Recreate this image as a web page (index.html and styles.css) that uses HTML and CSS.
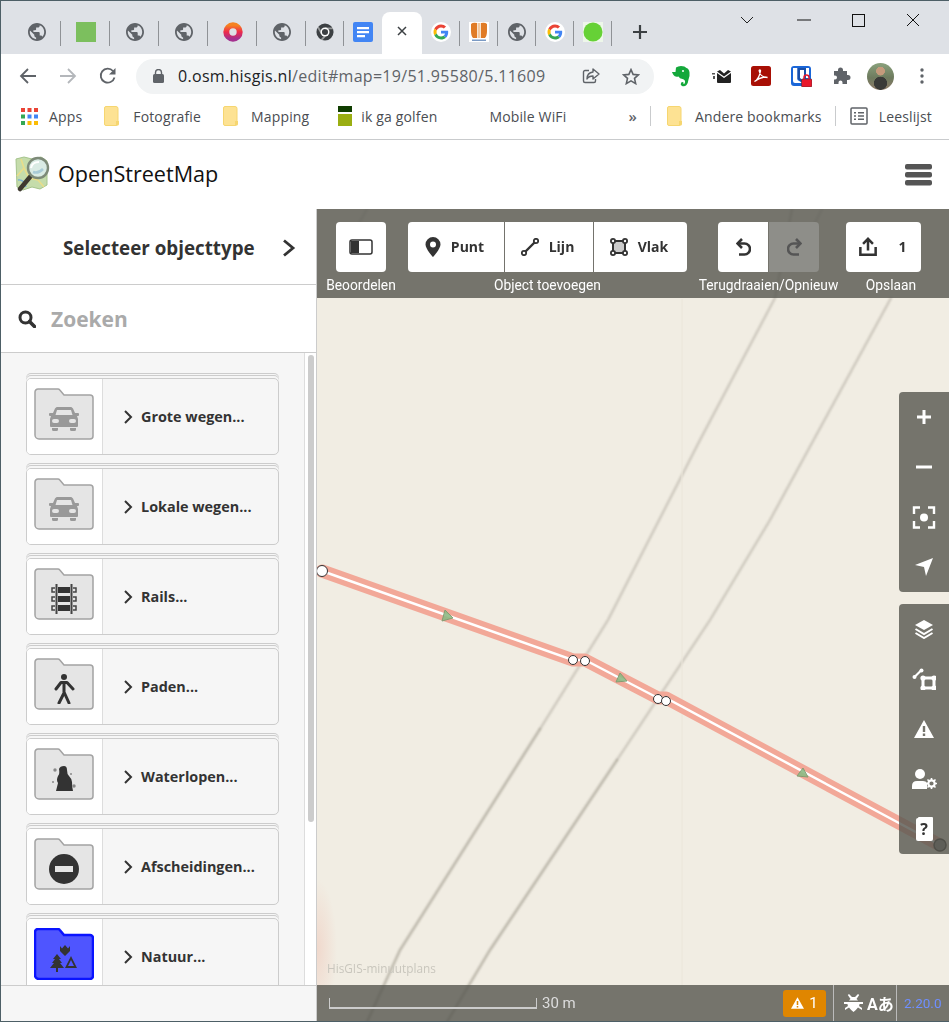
FILE: index.html
```html
<!DOCTYPE html>
<html lang="nl">
<head>
  <meta charset="UTF-8">
  <meta name="viewport" content="width=device-width, initial-scale=1.0">
  <title>OpenStreetMap</title>
  <link rel="stylesheet" href="styles.css">
</head>
<body>
  <svg class="sprite" width="0" height="0">
    <symbol id="globe" viewBox="2 2 20 20"><path fill="#5f6368" d="M12 2C6.48 2 2 6.48 2 12s4.48 10 10 10 10-4.48 10-10S17.52 2 12 2zm-1 17.93c-3.95-.49-7-3.85-7-7.93 0-.62.08-1.21.21-1.79L9 15v1c0 1.1.9 2 2 2v1.93zm6.9-2.54c-.26-.81-1-1.39-1.9-1.39h-1v-3c0-.55-.45-1-1-1H8v-2h2c.55 0 1-.45 1-1V7h2c1.1 0 2-.9 2-2v-.41c2.93 1.19 5 4.06 5 7.41 0 2.08-.8 3.97-2.1 5.39z"/></symbol>
    <symbol id="google" viewBox="-8 -8 64 64">
      <circle cx="24" cy="24" r="32" fill="#fff"/>
      <path fill="#EA4335" d="M24 9.5c3.54 0 6.71 1.22 9.21 3.6l6.85-6.85C35.9 2.38 30.47 0 24 0 14.62 0 6.51 5.38 2.56 13.22l7.98 6.19C12.43 13.72 17.74 9.5 24 9.5z"/>
      <path fill="#4285F4" d="M46.98 24.55c0-1.57-.15-3.09-.38-4.55H24v9.02h12.94c-.58 2.96-2.26 5.48-4.78 7.18l7.73 6c4.51-4.18 7.09-10.36 7.09-17.65z"/>
      <path fill="#FBBC05" d="M10.53 28.59c-.48-1.45-.76-2.99-.76-4.59s.27-3.14.76-4.59l-7.98-6.19C.92 16.46 0 20.12 0 24c0 3.88.92 7.54 2.56 10.78l7.97-6.19z"/>
      <path fill="#34A853" d="M24 48c6.48 0 11.93-2.13 15.89-5.81l-7.73-6c-2.15 1.45-4.92 2.3-8.16 2.3-6.26 0-11.57-4.22-13.47-9.91l-7.98 6.19C6.51 42.62 14.62 48 24 48z"/>
    </symbol>
    <symbol id="bm-folder" viewBox="0 0 16 20"><path fill="#fde293" stroke="#f6d670" d="M2 .5h10a2 2 0 0 1 2 2v15a2 2 0 0 1-2 2H2a1.500 1.500 0 0 1-1.500-1.500V2A1.500 1.500 0 0 1 2 .5z"/><path fill="#f6d670" d="M12 15h3v3a1.500 1.500 0 0 1-1.500 1.500H12z"/></symbol>
    <symbol id="folder" viewBox="0 0 60 52"><path d="M4 1h20a2 2 0 0 1 1.600.8L30 7h26a3 3 0 0 1 3 3v38a3 3 0 0 1-3 3H5a4 4 0 0 1-4-4V4a3 3 0 0 1 3-3z"/></symbol>
    <symbol id="car" viewBox="0 0 30 24"><path d="M6 1.500C6.500.600 7.500 0 8.500 0h13c1 0 2 .6 2.500 1.500L26 6h3a1 1 0 0 1 1 1v1a1 1 0 0 1-1 1h-1l1 3v7a1 1 0 0 1-1 1H2a1 1 0 0 1-1-1v-7l1-3H1a1 1 0 0 1-1-1V7a1 1 0 0 1 1-1h3zM8 3 6.500 8h17L22 3zM5 12a2 2 0 0 0 0 4h3a2 2 0 0 0 0-4zm17 0a2 2 0 0 0 0 4h3a2 2 0 0 0 0-4zM3 21h6v1.500A1.500 1.500 0 0 1 7.500 24h-3A1.500 1.500 0 0 1 3 22.500zm18 0h6v1.500a1.500 1.500 0 0 1-1.500 1.500h-3a1.500 1.500 0 0 1-1.500-1.500z"/></symbol>
  </svg>

  <div class="window">
    <div class="tabstrip">
      <div class="tab"><svg class="fav"><use href="#globe"/></svg></div>
      <div class="tab"><span class="fav-square"></span></div>
      <div class="tab"><svg class="fav"><use href="#globe"/></svg></div>
      <div class="tab"><svg class="fav"><use href="#globe"/></svg></div>
      <div class="tab">
        <svg class="fav fav-lg" viewBox="0 0 20 20"><defs><linearGradient id="poppy" x1="0" y1="0" x2="0" y2="1"><stop offset="0" stop-color="#f58220"/><stop offset=".5" stop-color="#ee2a4b"/><stop offset="1" stop-color="#a4308f"/></linearGradient></defs><circle cx="10" cy="10" r="6.700" fill="none" stroke="url(#poppy)" stroke-width="6"/></svg>
      </div>
      <div class="tab"><svg class="fav"><use href="#globe"/></svg></div>
      <div class="tab tab-narrow">
        <svg class="fav" viewBox="0 0 20 20"><circle cx="10" cy="10" r="9.500" fill="#3c4043"/><circle cx="10" cy="10" r="5" fill="#fff"/><circle cx="10" cy="10" r="3.400" fill="#3c4043"/><path d="M10 5h8.500l.5 2h-9zM5.600 12.500 1.500 5.500 3 4l4 7zM11 15l-4 4.500-2-1 4-4.500z" fill="#fff" opacity=".45"/></svg>
      </div>
      <div class="tab tab-narrow tab-plain">
        <svg class="fav fav-lg" viewBox="0 0 20 20"><rect width="20" height="20" rx="2" fill="#4285f4"/><path d="M4 5h12v2.200H4zM4 9h12v2.200H4zM4 13h8v2.200H4z" fill="#fff"/></svg>
      </div>
      <div class="tab-active">
        <svg width="10" height="10" viewBox="0 0 10 10"><path d="M1 1l8 8M9 1l-8 8" stroke="#3c4043" stroke-width="1.500"/></svg>
      </div>
      <div class="tab tab-narrow"><svg class="fav fav-g"><use href="#google"/></svg></div>
      <div class="tab tab-narrow">
        <svg class="fav fav-lg" viewBox="0 0 20 20"><rect width="20" height="20" fill="#fff"/><path d="M2 2q2-2 6-1v15H4q-2-2-2-7zM18 2q-2-2-6-1v15h4q2-2 2-7z" fill="#e07b26"/><path d="M8.500 1h3v15h-3z" fill="#f3c9a0"/><path d="M3 17.500h14v1.500H3z" fill="#7b9ac4"/></svg>
      </div>
      <div class="tab tab-narrow"><svg class="fav"><use href="#globe"/></svg></div>
      <div class="tab tab-narrow"><svg class="fav fav-g"><use href="#google"/></svg></div>
      <div class="tab tab-narrow">
        <svg class="fav fav-lg" viewBox="0 0 20 20"><rect width="20" height="20" fill="#eef7ea"/><circle cx="10" cy="10" r="9.500" fill="#66d136"/></svg>
      </div>
      <svg class="new-tab" width="16" height="16" viewBox="0 0 16 16"><path d="M8 1v14M1 8h14" stroke="#3c4043" stroke-width="2.200"/></svg>
      <div class="window-controls">
        <svg width="14" height="8" viewBox="0 0 14 8"><path d="M1 1l6 6 6-6" fill="none" stroke="#222"/></svg>
        <svg width="14" height="2" viewBox="0 0 14 2"><path d="M0 1h14" stroke="#111"/></svg>
        <svg width="13" height="13" viewBox="0 0 13 13"><rect x=".5" y=".5" width="12" height="12" fill="none" stroke="#111"/></svg>
        <svg width="14" height="14" viewBox="0 0 14 14"><path d="M1 1l12 12M13 1 1 13" stroke="#111"/></svg>
      </div>
    </div>

    <div class="toolbar">
      <svg class="nav-icon" viewBox="0 0 18 18"><path d="M17 9H2M9 2 2 9l7 7" fill="none" stroke="#5f6368" stroke-width="1.800"/></svg>
      <svg class="nav-icon" viewBox="0 0 18 18"><path d="M1 9h15M9 2l7 7-7 7" fill="none" stroke="#b4b7bb" stroke-width="1.800"/></svg>
      <svg class="nav-icon" viewBox="0 0 18 18"><path d="M15.500 10.500A7 7 0 1 1 14 4" fill="none" stroke="#5f6368" stroke-width="1.800"/><path d="M16.500 1v6.500H10z" fill="#5f6368"/></svg>
      <div class="omnibox">
        <svg class="lock" width="11" height="14" viewBox="0 0 11 14"><path d="M2.500 5V3.500a3 3 0 0 1 6 0V5" fill="none" stroke="#5f6368" stroke-width="1.400"/><rect y="5" width="11" height="9" rx="1.500" fill="#5f6368"/></svg>
        <span class="url"><span class="url-host">0.osm.hisgis.nl</span>/edit#map=19/51.95580/5.11609</span>
        <svg class="omni-icon omni-share" width="18" height="16" viewBox="0 0 18 16"><path d="M7 2.500H3A1.500 1.500 0 0 0 1.500 4v9A1.500 1.500 0 0 0 3 14.500h9a1.500 1.500 0 0 0 1.500-1.500v-2" fill="none" stroke="#5f6368" stroke-width="1.400"/><path d="M11 1l6 5-6 5V8C8 8 6 9 5 11c0-4 2-6.500 6-7z" fill="none" stroke="#5f6368" stroke-width="1.400" stroke-linejoin="round"/></svg>
        <svg class="omni-icon omni-star" width="18" height="17" viewBox="0 0 17 16"><path d="M8.500 1.500 10.500 6l5 .5-3.700 3.300 1.100 4.900-4.400-2.600-4.400 2.600 1.100-4.900L1.500 6.500l5-.5z" fill="none" stroke="#5f6368" stroke-width="1.500"/></svg>
      </div>
      <div class="extensions">
        <svg width="18" height="21" viewBox="0 0 18 21"><path d="M4 1.500Q6 0 9 0q4 0 5.500 2 2.500.5 3 4.500.5 4-1 7-.5 4-2 5.500-2 2-4.500 1-2-1-1-3 1-1.500 2.500-.5.500 1-.5 1.500 1.500.5 2-1.500.5-3-2.500-3.500-3-.5-4-2.500-3.500 1-5-1.500T0 6h3.500z" fill="#14a83b"/><circle cx="11" cy="5" r="1" fill="#fff"/></svg>
        <svg class="ext-mail" width="20" height="13" viewBox="0 0 20 13"><path d="M5 3 12 8l7-5v9a1 1 0 0 1-1 1H6a1 1 0 0 1-1-1zM5 1.500 8 0l4 3.500L16 0l3 1.500L12 6.500z" fill="#222"/><path d="M0 3h3v1.500H0zM1 6h2v3H1z" fill="#555"/></svg>
        <svg width="20" height="20" viewBox="0 0 20 20"><rect width="20" height="20" rx="2.500" fill="#a80f05"/><path d="M3.500 15.500C6 14.500 8.500 10 9.500 5c.2-1.500-1.500-1.500-1.300 0 .5 3 3 6.500 8.300 6.500-3-.8-7-.5-13 4z" fill="none" stroke="#fff" stroke-width="1.300"/></svg>
        <svg width="21" height="21" viewBox="0 0 21 21"><rect width="20" height="20" rx="3" fill="#1a66d8"/><path d="M2 2h4.500v12l5 3H4a2 2 0 0 1-2-2z" fill="#fff"/><path d="M8 2h10v10h-3V4.500H8z" fill="#fff"/><path d="M6.500 2H15v11l-4.200 3-4.300-3z" fill="#1a4fa8"/><path d="M9 4h4v8l-2 1.500L9 12z" fill="#fff"/><rect x="10.500" y="13" width="10.500" height="8" rx="1" fill="#e8182c" stroke="#333" stroke-width=".5"/><path d="M13 13v-1.500a2.500 2.500 0 0 1 5 0V13" fill="none" stroke="#e8182c" stroke-width="1.500"/></svg>
        <svg class="ext-puzzle" width="18" height="18" viewBox="0 0 18 18"><path d="M1 4h4V3a2.500 2.500 0 0 1 5 0v1h4v4h1a2.500 2.500 0 0 1 0 5h-1v4H9.500v-1.500a2 2 0 0 0-4 0V17H1v-4.500h1a2 2 0 0 0 0-4H1z" fill="#5f6368"/></svg>
        <span class="avatar"></span>
        <svg class="ext-menu" width="4" height="16" viewBox="0 0 4 16"><circle cx="2" cy="2" r="1.700" fill="#5f6368"/><circle cx="2" cy="8" r="1.700" fill="#5f6368"/><circle cx="2" cy="14" r="1.700" fill="#5f6368"/></svg>
      </div>
    </div>

    <div class="bookmarks">
      <span class="bm bm-apps">
        <svg width="17" height="17" viewBox="0 0 17 17"><g fill="#ea4335"><rect width="4" height="4"/><rect x="6.500" width="4" height="4"/><rect x="13" width="4" height="4"/></g><g><rect y="6.500" width="4" height="4" fill="#34a853"/><rect x="6.500" y="6.500" width="4" height="4" fill="#4285f4"/><rect x="13" y="6.500" width="4" height="4" fill="#4285f4"/></g><g><rect y="13" width="4" height="4" fill="#34a853"/><rect x="6.500" y="13" width="4" height="4" fill="#fbbc05"/><rect x="13" y="13" width="4" height="4" fill="#fbbc05"/></g></svg>
        Apps
      </span>
      <span class="bm bm-foto"><svg class="bm-icon"><use href="#bm-folder"/></svg>Fotografie</span>
      <span class="bm bm-map"><svg class="bm-icon"><use href="#bm-folder"/></svg>Mapping</span>
      <span class="bm bm-golf"><svg width="14" height="20" viewBox="0 0 14 20"><rect width="14" height="6" fill="#0f3d00"/><rect y="8" width="14" height="12" fill="#9aae12"/></svg>ik ga golfen</span>
      <span class="bm bm-wifi">Mobile WiFi</span>
      <span class="bm-more">»</span>
      <span class="bm-divider"></span>
      <span class="bm bm-other"><svg class="bm-icon"><use href="#bm-folder"/></svg>Andere bookmarks</span>
      <span class="bm-divider"></span>
      <span class="bm bm-read">
        <svg width="18" height="18" viewBox="0 0 18 18"><rect x="1" y="1" width="16" height="16" rx="1" fill="none" stroke="#5f6368" stroke-width="1.500"/><path d="M4 5h2v1.500H4zM8 5h6v1.500H8zM4 8.300h2v1.500H4zM8 8.300h6v1.500H8zM4 11.600h2v1.500H4zM8 11.600h6v1.500H8z" fill="#5f6368"/></svg>
        Leeslijst
      </span>
    </div>

    <header class="site-header">
      <svg class="logo" width="35" height="36" viewBox="0 0 35 36">
        <path d="M1 3 9 1l8 2 9-2 6 4v24l-7 4-8-2-9 3-6-3z" fill="#c5dcab" stroke="#a5c48c"/>
        <path d="M2 20 9 12l5 10 9 2 6 7M6 3l3 9" fill="none" stroke="#e9dd8a" stroke-width="1.600"/>
        <path d="M3 24q6-1 8 7" fill="none" stroke="#76aed6" stroke-width="1.400"/>
        <path d="M15 21 5 33" stroke="#3e3a30" stroke-width="4.500" stroke-linecap="round"/>
        <circle cx="23" cy="12" r="10" fill="#dcecea" fill-opacity=".9" stroke="#7d8a78" stroke-width="2.400"/>
        <path d="M16 12q1-6 8-6" fill="none" stroke="#fff" stroke-width="2"/>
        <path d="M18 16q5 2 10-3" fill="none" stroke="#a9cbd6" stroke-width="2.500"/>
      </svg>
      <span class="site-name">OpenStreetMap</span>
      <svg class="burger" width="27" height="24" viewBox="0 0 27 24"><rect y="1" width="27" height="5.500" rx="2" fill="#555"/><rect y="9" width="27" height="5.500" rx="2" fill="#555"/><rect y="17" width="27" height="5.500" rx="2" fill="#555"/></svg>
    </header>

    <div class="editor">
      <aside class="sidebar">
        <div class="sidebar-head">
          <h2>Selecteer objecttype</h2>
          <svg width="14" height="18" viewBox="0 0 14 18"><path d="M2 1.500 11 9l-9 7.500" fill="none" stroke="#333" stroke-width="2.800"/></svg>
        </div>
        <div class="search">
          <svg width="18" height="18" viewBox="0 0 18 18"><circle cx="7.500" cy="7.500" r="5.500" fill="none" stroke="#333" stroke-width="3"/><path d="M11.500 11.500l5 5" stroke="#333" stroke-width="3.600" stroke-linecap="round"/></svg>
          <span>Zoeken</span>
        </div>
        <div class="preset-area">
          <div class="preset-list">
            <div class="preset">
              <div class="preset-icon"><svg class="folder"><use href="#folder"/></svg><svg class="glyph glyph-car"><use href="#car"/></svg></div>
              <div class="preset-label"><svg class="chev" viewBox="0 0 9 14"><path d="M1 1l6 6-6 6" fill="none" stroke="#333" stroke-width="2"/></svg>Grote wegen...</div>
            </div>
            <div class="preset">
              <div class="preset-icon"><svg class="folder"><use href="#folder"/></svg><svg class="glyph glyph-car"><use href="#car"/></svg></div>
              <div class="preset-label"><svg class="chev" viewBox="0 0 9 14"><path d="M1 1l6 6-6 6" fill="none" stroke="#333" stroke-width="2"/></svg>Lokale wegen...</div>
            </div>
            <div class="preset">
              <div class="preset-icon"><svg class="folder"><use href="#folder"/></svg>
                <svg class="glyph" viewBox="0 0 26 30" width="26" height="30"><path d="M4.500 0h2v30h-2zM19.500 0h2v30h-2z" fill="#444"/><path d="M7 3h12v6H7zM7 12h12v6H7zM7 21h12v6H7z" fill="#333"/><path d="M4 4H1v4h3M4 13H1v4h3M4 22H1v4h3M22 4h3v4h-3M22 13h3v4h-3M22 22h3v4h-3" fill="none" stroke="#444" stroke-width="1.500"/></svg>
              </div>
              <div class="preset-label"><svg class="chev" viewBox="0 0 9 14"><path d="M1 1l6 6-6 6" fill="none" stroke="#333" stroke-width="2"/></svg>Rails...</div>
            </div>
            <div class="preset">
              <div class="preset-icon"><svg class="folder"><use href="#folder"/></svg>
                <svg class="glyph" viewBox="0 0 22 30" width="22" height="30"><circle cx="11" cy="3" r="3" fill="#333"/><path d="M3 15l5-6.500h6L20 15M11 9v10l-5 10M11 18l5 11" fill="none" stroke="#333" stroke-width="3" stroke-linecap="round" stroke-linejoin="round"/></svg>
              </div>
              <div class="preset-label"><svg class="chev" viewBox="0 0 9 14"><path d="M1 1l6 6-6 6" fill="none" stroke="#333" stroke-width="2"/></svg>Paden...</div>
            </div>
            <div class="preset">
              <div class="preset-icon"><svg class="folder"><use href="#folder"/></svg>
                <svg class="glyph" viewBox="0 0 24 26" width="24" height="26"><path d="M7 3q1-3 5-3 3 0 3 4 0 4 2 6 3 3 3 6 0 5 1 9H4q1-4 2-8-2-3 0-7 2-2 1-7z" fill="#333"/><circle cx="3" cy="4" r="1.700" fill="#888"/><circle cx="19" cy="8" r="1" fill="#888"/><circle cx="1" cy="16" r="1" fill="#888"/><circle cx="22" cy="20" r="1.700" fill="#888"/></svg>
              </div>
              <div class="preset-label"><svg class="chev" viewBox="0 0 9 14"><path d="M1 1l6 6-6 6" fill="none" stroke="#333" stroke-width="2"/></svg>Waterlopen...</div>
            </div>
            <div class="preset">
              <div class="preset-icon"><svg class="folder"><use href="#folder"/></svg>
                <svg class="glyph" viewBox="0 0 30 30" width="30" height="30"><circle cx="15" cy="15" r="15" fill="#333"/><rect x="6" y="12" width="18" height="6" fill="#e5e5e5"/></svg>
              </div>
              <div class="preset-label"><svg class="chev" viewBox="0 0 9 14"><path d="M1 1l6 6-6 6" fill="none" stroke="#333" stroke-width="2"/></svg>Afscheidingen...</div>
            </div>
            <div class="preset">
              <div class="preset-icon"><svg class="folder folder-blue"><use href="#folder"/></svg>
                <svg class="glyph" viewBox="0 0 28 28" width="28" height="28"><path d="M10 1l2 2.500L15 0l3 3.500L20 1v5l-5 5-5-5z" fill="#333"/><path d="M7 9l4 5H9l3 4h-2l4 5H8v4H6v-4H0l4-5H2l3-4H3z" fill="#333"/><path d="M21 11l6 12H15zM21 15l-3 6h6z" fill="#333" fill-rule="evenodd"/></svg>
              </div>
              <div class="preset-label"><svg class="chev" viewBox="0 0 9 14"><path d="M1 1l6 6-6 6" fill="none" stroke="#333" stroke-width="2"/></svg>Natuur...</div>
            </div>
          </div>
          <div class="scroll-track"><div class="scroll-thumb"></div></div>
        </div>
        <div class="sidebar-foot"></div>
      </aside>

      <main class="map">
        <svg class="map-canvas" viewBox="0 0 632 813" width="632" height="813">
          <g class="map-scan" fill="none" stroke-linecap="round">
            <path d="M475 0 458 89 383 231 291 411 223 520" stroke="#8d8679" stroke-width="2" opacity=".42"/>
            <path d="M223 520 83 741 50 813" stroke="#8d8679" stroke-width="2.400" opacity=".55"/>
            <path d="M574 89 453 311 393 411 300 551" stroke="#8d8679" stroke-width="2" opacity=".42"/>
            <path d="M300 551 173 741 130 813" stroke="#8d8679" stroke-width="2.400" opacity=".55"/>
            <path d="M505 0 490 30M50 0 25 45" stroke="#8d8679" stroke-width="2" opacity=".3"/>
          </g>
          <path d="M365 90V780" fill="none" stroke="#ebe6da" stroke-width="1"/>
          <g fill="none" stroke-linecap="round" stroke-linejoin="round">
            <path d="M5 362 256 451h12l73 38h8L623 636" stroke="#f2a898" stroke-width="13"/>
            <path d="M5 362 256 451h12l73 38h8L623 636" stroke="#fff" stroke-width="2.500"/>
          </g>
          <g fill="#8dbb85" stroke="#7a9a6e" opacity=".9">
            <path d="M125 412l11-3-8-8z"/>
            <path d="M299 473l11-1-7-8z"/>
            <path d="M480 567l11 1-5-9z"/>
          </g>
          <g fill="#fff" stroke="#333" stroke-width="1">
            <circle cx="5" cy="362" r="5.500"/>
            <circle cx="256" cy="451" r="4.500"/>
            <circle cx="268" cy="452" r="4.500"/>
            <circle cx="341" cy="490" r="4.500"/>
            <circle cx="349" cy="492" r="4.500"/>
            <circle cx="623" cy="636" r="6" fill="#777" stroke="#222" stroke-width="1.500"/>
          </g>
        </svg>

        <div class="topbar">
          <div class="tool-group tool-review">
            <div class="tool-row">
              <button class="tool tool-square"><svg width="24" height="16" viewBox="0 0 24 16"><rect x="1" y="1" width="22" height="14" rx="2" fill="none" stroke="#333" stroke-width="1.500"/><rect x="2" y="2" width="8" height="12" fill="#333"/></svg></button>
            </div>
            <span class="tool-label">Beoordelen</span>
          </div>
          <div class="tool-group tool-add">
            <div class="tool-row">
              <button class="tool tool-wide tool-punt"><svg width="16" height="20" viewBox="0 0 16 20"><path d="M8 0a7.500 7.500 0 0 1 7.500 7.500C15.500 12 8 20 8 20S.5 12 .5 7.500A7.500 7.500 0 0 1 8 0zm0 4.500a3 3 0 1 0 0 6 3 3 0 0 0 0-6z" fill="#333" fill-rule="evenodd"/></svg><span class="tool-text">Punt</span></button>
              <button class="tool tool-wide tool-lijn"><svg width="18" height="18" viewBox="0 0 18 18"><path d="M3 15 15 3" stroke="#333" stroke-width="2.400"/><circle cx="3" cy="15" r="2.200" fill="#fff" stroke="#333" stroke-width="1.800"/><circle cx="15" cy="3" r="2.200" fill="#fff" stroke="#333" stroke-width="1.800"/></svg><span class="tool-text">Lijn</span></button>
              <button class="tool tool-wide tool-vlak"><svg width="18" height="18" viewBox="0 0 18 18"><path d="M3 3h12v12H3z" fill="#ccc" stroke="#333" stroke-width="2"/><g fill="#fff" stroke="#333" stroke-width="1.800"><circle cx="3" cy="3" r="2.100"/><circle cx="15" cy="3" r="2.100"/><circle cx="3" cy="15" r="2.100"/><circle cx="15" cy="15" r="2.100"/></g></svg><span class="tool-text">Vlak</span></button>
            </div>
            <span class="tool-label">Object toevoegen</span>
          </div>
          <div class="tool-group tool-history">
            <div class="tool-row">
              <button class="tool tool-square tool-undo"><svg width="15" height="18" viewBox="0 0 15 18"><path d="M6 1 1.500 5.500 6 10" fill="none" stroke="#333" stroke-width="2.600"/><path d="M2 5.500h6.500a5 5 0 0 1 0 11H3" fill="none" stroke="#333" stroke-width="2.600"/></svg></button>
              <button class="tool tool-square tool-redo" disabled><svg width="15" height="18" viewBox="0 0 15 18"><path d="M9 1l4.500 4.500L9 10" fill="none" stroke="#555" stroke-width="2.600"/><path d="M13 5.500H6.500a5 5 0 0 0 0 11H12" fill="none" stroke="#555" stroke-width="2.600"/></svg></button>
            </div>
            <span class="tool-label">Terugdraaien/Opnieuw</span>
          </div>
          <div class="tool-group tool-save">
            <div class="tool-row">
              <button class="tool tool-upload"><svg width="18" height="20" viewBox="0 0 20 20"><path d="M10 1v13M4.500 6.500 10 1l5.500 5.500" fill="none" stroke="#333" stroke-width="2.800"/><path d="M1.500 10v8.500h17V10" fill="none" stroke="#333" stroke-width="2.800"/></svg><span class="save-count tool-text">1</span></button>
            </div>
            <span class="tool-label save-label">Opslaan</span>
          </div>
        </div>

        <div class="map-middle">
          <span class="attribution">HisGIS-minuutplans</span>
          <div class="controls">
            <div class="control-panel">
              <div class="control"><svg width="16" height="16" viewBox="0 0 16 16"><path d="M8 1v14M1 8h14" stroke="#fff" stroke-width="3"/></svg></div>
              <div class="control"><svg width="16" height="4" viewBox="0 0 16 4"><path d="M0 2h16" stroke="#fff" stroke-width="3"/></svg></div>
              <div class="control"><svg width="24" height="23" viewBox="0 0 24 23"><path d="M8 1.500H2V8M16 1.500h6V8M8 21.500H2V15M16 21.500h6V15" fill="none" stroke="#fff" stroke-width="2.400"/><circle cx="12" cy="11.500" r="4" fill="#fff"/></svg></div>
              <div class="control"><svg width="18" height="18" viewBox="0 0 18 18"><path d="M18 0 11 18 9 9 0 7z" fill="#fff"/></svg></div>
            </div>
            <div class="control-panel">
              <div class="control"><svg width="20" height="20" viewBox="0 0 20 20"><path d="M10 1l9 5-9 5-9-5z" fill="#fff"/><path d="M1.500 10 10 15l8.500-5M1.500 14 10 19l8.500-5" fill="none" stroke="#fff" stroke-width="2"/></svg></div>
              <div class="control"><svg width="24" height="22" viewBox="0 0 24 22"><path d="M2.500 9 9 2.500" stroke="#fff" stroke-width="2.200"/><circle cx="2.500" cy="9" r="2" fill="#fff"/><circle cx="9.500" cy="2.500" r="2" fill="#fff"/><path d="M11 10h11v10H11z" fill="none" stroke="#fff" stroke-width="3"/><g fill="#fff"><circle cx="11" cy="10" r="2.600"/><circle cx="22" cy="10" r="2.600"/><circle cx="11" cy="20" r="2.600"/><circle cx="22" cy="20" r="2.600"/></g></svg></div>
              <div class="control"><svg width="20" height="18" viewBox="0 0 20 18"><path d="M10 0l10 18H0zM8.800 6v6h2.400V6zm0 7.500V16h2.400v-2.500z" fill="#fff" fill-rule="evenodd"/></svg></div>
              <div class="control"><svg width="25" height="20" viewBox="0 0 25 20"><circle cx="8" cy="5" r="5" fill="#fff"/><path d="M0 20v-3q0-5 5-5h6q3 0 4 2v6z" fill="#fff"/><circle cx="19.500" cy="14.500" r="3.200" fill="none" stroke="#fff" stroke-width="2.200"/><path d="M19.500 9v2M19.500 18v2M14 14.500h2M23 14.500h2M15.500 10.500l1.500 1.500M22 17l1.500 1.500M23.500 10.500 22 12M17 17l-1.500 1.500" stroke="#fff" stroke-width="1.600"/></svg></div>
              <div class="control"><div class="help-book">?</div></div>
            </div>
          </div>
        </div>

        <div class="statusbar">
          <div class="scale"><span class="scale-bar"></span><span class="scale-text">30 m</span></div>
          <div class="issues"><svg width="13" height="12" viewBox="0 0 20 18"><path d="M10 0l10 18H0z" fill="#fff"/><path d="M8.800 6v6h2.400V6zm0 7.500V16h2.400v-2.500z" fill="#e08600"/></svg>1</div>
          <div class="status-tools">
            <svg width="19" height="18" viewBox="0 0 19 18"><path d="M5 0l3 3h3l3-3 1.200 1L12.500 5q1 .5 1.500 1.500H5Q5.500 5.500 6.500 5L3.800 1zM0 8h19v2h-3.500q0 1-.5 2l3 2v2l-4-2.600Q12 16 9.500 18 7 16 5 13.400L1 16v-2l3-2q-.5-1-.5-2H0z" fill="#fff"/></svg>
            <span class="lang">A<span class="lang-kana">あ</span></span>
          </div>
          <div class="version">2.20.0</div>
        </div>
      </main>
    </div>
  </div>
</body>
</html>
```

FILE: styles.css
```css
* {
  box-sizing: border-box;
}
body {
  margin: 0;
  font-family: "Open Sans", "Liberation Sans", sans-serif;
  color: #333;
  background: #fff;
}
.sprite {
  position: absolute;
}
.window {
  width: 949px;
  height: 1022px;
  border: solid #4d5f66;
  border-width: 1px 0 1px 1px;
  display: flex;
  flex-direction: column;
  overflow: hidden;
}

/* browser */
.tabstrip {
  height: 53px;
  flex: none;
  background: #dee1e6;
  display: flex;
  align-items: flex-end;
  padding-left: 11px;
}
.tab {
  width: 49px;
  height: 41px;
  display: flex;
  align-items: center;
  justify-content: center;
  padding-bottom: 4px;
  background: linear-gradient(#8f9296, #8f9296) right 8px / 1px 25px no-repeat;
}
.tab-narrow {
  width: 38px;
}
.tab-plain {
  background: none;
}
.tab-active {
  width: 40px;
  height: 42px;
  background: #fff;
  border-radius: 8px 8px 0 0;
  display: flex;
  align-items: center;
  justify-content: center;
  padding-bottom: 5px;
}
.fav {
  width: 18px;
  height: 18px;
}
.fav-lg {
  width: 20px;
  height: 20px;
}
.fav-g {
  width: 20px;
  height: 20px;
}
.fav-square {
  width: 20px;
  height: 20px;
  background: #7cbf5e;
}
.new-tab {
  margin: 0 0 14px 20px;
}
.window-controls {
  margin-left: auto;
  align-self: flex-start;
  display: flex;
  align-items: center;
  gap: 41px;
  padding: 12px 29px 0 0;
}
.window-controls svg:first-child {
  margin-right: 2px;
}
.toolbar {
  height: 44px;
  flex: none;
  background: #fff;
  display: flex;
  align-items: center;
  padding-left: 18px;
}
.nav-icon {
  width: 18px;
  height: 18px;
  margin-right: 22px;
}
.omnibox {
  width: 518px;
  height: 35px;
  margin-left: -3px;
  background: #f1f3f4;
  border-radius: 18px;
  display: flex;
  align-items: center;
  padding-left: 17px;
}
.lock {
  margin-right: 14px;
  flex: none;
}
.url {
  font-size: 16px;
  letter-spacing: .3px;
  color: #5f6368;
  white-space: nowrap;
}
.url-host {
  color: #202124;
}
.omni-share {
  margin-left: 37px;
}
.omni-star {
  margin-left: 22px;
}
.extensions {
  display: flex;
  align-items: center;
  margin-left: 18px;
  gap: 20px;
}
.ext-mail {
  margin-left: 2px;
  margin-right: -1px;
}
.ext-puzzle {
  margin-left: 1px;
}
.ext-menu {
  margin-left: 6px;
}
.avatar {
  width: 27px;
  height: 27px;
  border-radius: 50%;
  margin-left: -4px;
  background: radial-gradient(circle at 50% 30%, #c49a7c 0 18%, transparent 20%), radial-gradient(circle at 50% 75%, #3a3a38 0 26%, transparent 28%), linear-gradient(#8aa17c, #6d7a5e 55%, #8f7a68);
}
.bookmarks {
  height: 42px;
  flex: none;
  background: #fff;
  border-bottom: 1px solid #c9cbcd;
  display: flex;
  align-items: center;
  padding: 0 0 5px 20px;
  font-size: 14px;
  letter-spacing: .15px;
  color: #4a4d52;
}
.bm {
  display: flex;
  align-items: center;
  white-space: nowrap;
}
.bm-icon {
  width: 16px;
  height: 20px;
  margin-right: 13px;
}
.bm-apps svg {
  margin-right: 11px;
}
.bm-foto {
  margin-left: 22px;
}
.bm-map {
  margin-left: 22px;
}
.bm-map .bm-icon {
  margin-right: 12px;
}
.bm-golf {
  margin-left: 29px;
}
.bm-golf svg {
  margin-right: 9px;
}
.bm-wifi {
  margin-left: 52px;
}
.bm-more {
  margin-left: 62px;
  font-size: 15px;
  font-weight: 600;
  color: #5f6368;
}
.bm-divider {
  width: 1px;
  height: 20px;
  background: #c9cbcd;
  margin-left: 13px;
}
.bm-other {
  margin-left: 16px;
}
.bm-other .bm-icon {
  margin-right: 12px;
}
.bm-read {
  margin-left: 14px;
}
.bm-read svg {
  margin-right: 11px;
}

/* site header */
.site-header {
  height: 69px;
  flex: none;
  background: #fff;
  display: flex;
  align-items: center;
  padding: 0 17px 0 14px;
}
.logo {
  margin-bottom: 2px;
}
.site-name {
  font-size: 21.600px;
  font-weight: 500;
  color: #111;
  margin: 0 0 2px 8px;
}
.burger {
  margin-left: auto;
}

/* editor */
.editor {
  flex: 1;
  display: flex;
  min-height: 0;
}
.sidebar {
  width: 316px;
  flex: none;
  display: flex;
  flex-direction: column;
  background: #fff;
  border-right: 1px solid #ccc;
}
.sidebar-head {
  height: 76px;
  flex: none;
  border-bottom: 1px solid #ccc;
  display: flex;
  align-items: center;
  padding: 2px 0 0 62px;
}
.sidebar-head h2 {
  margin: 0;
  font-size: 18.800px;
  font-weight: 700;
  color: #333;
}
.sidebar-head svg {
  margin-left: 27px;
}
.search {
  height: 68px;
  flex: none;
  border-bottom: 1px solid #ccc;
  display: flex;
  align-items: center;
  padding-left: 17px;
  font-size: 21px;
  font-weight: 700;
  color: #aaa;
}
.search span {
  margin-left: 15px;
}
.preset-area {
  flex: 1;
  display: flex;
  min-height: 0;
}
.preset-list {
  width: 304px;
  flex: none;
  background: #f6f6f6;
  border-right: 1px solid #ddd;
  padding: 25px 0 0 25px;
  overflow: hidden;
}
.preset {
  width: 253px;
  height: 77px;
  margin-bottom: 13px;
  display: flex;
  border: 1px solid #ccc;
  border-radius: 5px;
  background: #f6f6f6;
  box-shadow: 0 -2px 0 #f6f6f6, 0 -3px 0 #ccc, 0 -4px 0 #f6f6f6, 0 -5px 0 #ccc;
}
.preset-icon {
  width: 76px;
  flex: none;
  background: #fff;
  border-right: 1px solid #ddd;
  border-radius: 4px 0 0 4px;
  display: flex;
  align-items: center;
  justify-content: center;
  position: relative;
}
.folder {
  position: absolute;
  left: 7px;
  top: 9px;
  width: 60px;
  height: 52px;
  fill: #e5e5e5;
  stroke: #a3a3a3;
  stroke-width: 1.500;
}
.folder-blue {
  fill: #4f55ff;
  stroke: #0a14ff;
  stroke-width: 2.500;
}
.glyph {
  position: absolute;
  left: 50%;
  top: 40px;
  transform: translate(-50%, -50%);
  margin-left: -1px;
  fill: #333;
}
.glyph-car {
  width: 30px;
  height: 24px;
  fill: #999;
}
.preset-label {
  flex: 1;
  display: flex;
  align-items: center;
  padding-left: 21px;
  font-size: 14.400px;
  font-weight: 700;
  color: #333;
  white-space: nowrap;
}
.chev {
  width: 9px;
  height: 14px;
  margin-right: 8px;
}
.scroll-track {
  flex: 1;
  padding: 2px 0 0 3px;
}
.scroll-thumb {
  width: 6px;
  height: 467px;
  background: #ccc;
  border-radius: 3px;
}
.sidebar-foot {
  height: 36px;
  flex: none;
  background: #f6f6f6;
  border-top: 1px solid #ccc;
}

/* map */
.map {
  flex: 1;
  display: flex;
  flex-direction: column;
  position: relative;
  background: radial-gradient(ellipse 20px 70px at 0 740px, #f0d8cc, transparent), #f1ede3;
  overflow: hidden;
}
.map-canvas {
  position: absolute;
  left: 0;
  top: 0;
}
.map-scan {
  filter: blur(1px);
}
.topbar {
  height: 89px;
  flex: none;
  position: relative;
  background: rgba(89, 89, 82, .82);
  display: flex;
  padding: 13px 0 0 9px;
}
.tool-group {
  display: flex;
  flex-direction: column;
  align-items: center;
}
.tool-review {
  width: 70px;
}
.tool-add {
  width: 279px;
  margin-left: 12px;
}
.tool-history {
  width: 139px;
  margin-left: 12px;
}
.tool-save {
  width: 75px;
  margin-left: 8px;
}
.tool-row {
  display: flex;
  height: 50px;
}
.tool {
  height: 50px;
  border: none;
  padding: 0;
  background: #fff;
  font-family: inherit;
  font-size: 14px;
  font-weight: 700;
  color: #333;
  display: flex;
  align-items: center;
  justify-content: center;
  border-radius: 4px;
}
.tool-text {
  margin-bottom: 2px;
}
.tool-square {
  width: 50px;
}
.tool-wide {
  gap: 10px;
  padding-right: 3px;
  border-radius: 0;
  border-left: 1px solid #74736d;
}
.tool-punt {
  width: 96px;
  border-left: none;
  border-radius: 4px 0 0 4px;
}
.tool-lijn {
  width: 89px;
}
.tool-vlak {
  width: 94px;
  border-radius: 0 4px 4px 0;
}
.tool-undo {
  border-radius: 4px 0 0 4px;
  margin-right: 1px;
}
.tool-redo {
  background: #8e8e89;
  border-radius: 0 4px 4px 0;
}
.tool-upload {
  width: 75px;
  padding-right: 1px;
}
.save-count {
  margin-left: 21px;
}
.tool-label {
  font-family: "Roboto", sans-serif;
  font-size: 13.800px;
  color: #fff;
  margin-top: 5px;
  white-space: nowrap;
}
.save-label {
  margin-left: 15px;
}
.map-middle {
  flex: 1;
  position: relative;
  display: flex;
  justify-content: space-between;
  min-height: 0;
}
.attribution {
  align-self: flex-end;
  font-size: 11.800px;
  color: #c9c6bd;
  margin: 0 0 9px 10px;
}
.controls {
  padding-top: 94px;
  display: flex;
  flex-direction: column;
  gap: 12px;
}
.control-panel {
  width: 50px;
  background: rgba(89, 89, 82, .82);
  border-radius: 4px 0 0 4px;
}
.control {
  height: 50px;
  display: flex;
  align-items: center;
  justify-content: center;
}
.help-book {
  width: 17px;
  height: 23px;
  background: #fff;
  border-radius: 2px;
  box-shadow: 1px -2px 0 -1px #fff;
  color: #333;
  font-size: 16px;
  font-weight: 700;
  line-height: 23px;
  text-align: center;
}
.statusbar {
  height: 36px;
  flex: none;
  position: relative;
  background: rgba(89, 89, 82, .82);
  display: flex;
  align-items: center;
  color: #ddd;
}
.scale {
  display: flex;
  align-items: center;
  margin-left: 12px;
}
.scale-bar {
  width: 208px;
  height: 11px;
  border: solid #ccc;
  border-width: 0 1px 2px 1px;
}
.scale-text {
  font-family: "Roboto", sans-serif;
  font-size: 15px;
  margin-left: 5px;
  color: #ddd;
}
.issues {
  margin-left: auto;
  width: 43px;
  height: 27px;
  background: #e08600;
  border-radius: 3px;
  display: flex;
  align-items: center;
  justify-content: center;
  gap: 5px;
  font-family: "Roboto", sans-serif;
  font-size: 15px;
  color: #fff;
}
.status-tools {
  width: 64px;
  height: 36px;
  margin-left: 7px;
  border-left: 1px solid #bbb;
  border-right: 1px solid #bbb;
  display: flex;
  align-items: center;
  padding-left: 10px;
  gap: 4px;
  color: #fff;
}
.lang {
  font-family: "Roboto", "Noto Sans CJK JP", sans-serif;
  font-size: 16px;
  font-weight: 700;
  white-space: nowrap;
}
.lang-kana {
  font-family: "Noto Sans CJK JP", sans-serif;
  font-weight: 700;
}
.version {
  width: 52px;
  padding-left: 7px;
  font-family: "Roboto", sans-serif;
  font-size: 13.500px;
  color: #6f8fff;
}
```
